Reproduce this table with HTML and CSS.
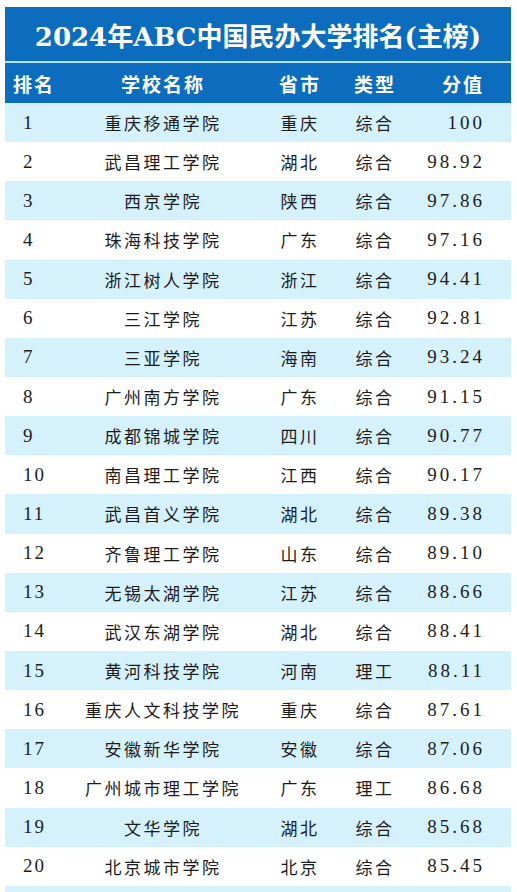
FILE: index.html
```html
<!DOCTYPE html>
<html lang="zh">
<head>
<meta charset="utf-8">
<title>2024年ABC中国民办大学排名(主榜)</title>
<link rel="stylesheet" href="styles.css">
</head>
<body>
<div class="board">
  <div class="title">2024年ABC中国民办大学排名(主榜)</div>
  <div class="row head">
    <div class="c">排名</div><div class="c">学校名称</div><div class="c">省市</div><div class="c">类型</div><div class="c">分值</div>
  </div>
  <div class="row odd"><div class="c rank">1</div><div class="c">重庆移通学院</div><div class="c">重庆</div><div class="c">综合</div><div class="c score">100</div></div>
  <div class="row"><div class="c rank">2</div><div class="c">武昌理工学院</div><div class="c">湖北</div><div class="c">综合</div><div class="c score">98.92</div></div>
  <div class="row odd"><div class="c rank">3</div><div class="c">西京学院</div><div class="c">陕西</div><div class="c">综合</div><div class="c score">97.86</div></div>
  <div class="row"><div class="c rank">4</div><div class="c">珠海科技学院</div><div class="c">广东</div><div class="c">综合</div><div class="c score">97.16</div></div>
  <div class="row odd"><div class="c rank">5</div><div class="c">浙江树人学院</div><div class="c">浙江</div><div class="c">综合</div><div class="c score">94.41</div></div>
  <div class="row"><div class="c rank">6</div><div class="c">三江学院</div><div class="c">江苏</div><div class="c">综合</div><div class="c score">92.81</div></div>
  <div class="row odd"><div class="c rank">7</div><div class="c">三亚学院</div><div class="c">海南</div><div class="c">综合</div><div class="c score">93.24</div></div>
  <div class="row"><div class="c rank">8</div><div class="c">广州南方学院</div><div class="c">广东</div><div class="c">综合</div><div class="c score">91.15</div></div>
  <div class="row odd"><div class="c rank">9</div><div class="c">成都锦城学院</div><div class="c">四川</div><div class="c">综合</div><div class="c score">90.77</div></div>
  <div class="row"><div class="c rank">10</div><div class="c">南昌理工学院</div><div class="c">江西</div><div class="c">综合</div><div class="c score">90.17</div></div>
  <div class="row odd"><div class="c rank">11</div><div class="c">武昌首义学院</div><div class="c">湖北</div><div class="c">综合</div><div class="c score">89.38</div></div>
  <div class="row"><div class="c rank">12</div><div class="c">齐鲁理工学院</div><div class="c">山东</div><div class="c">综合</div><div class="c score">89.10</div></div>
  <div class="row odd"><div class="c rank">13</div><div class="c">无锡太湖学院</div><div class="c">江苏</div><div class="c">综合</div><div class="c score">88.66</div></div>
  <div class="row"><div class="c rank">14</div><div class="c">武汉东湖学院</div><div class="c">湖北</div><div class="c">综合</div><div class="c score">88.41</div></div>
  <div class="row odd"><div class="c rank">15</div><div class="c">黄河科技学院</div><div class="c">河南</div><div class="c">理工</div><div class="c score">88.11</div></div>
  <div class="row"><div class="c rank">16</div><div class="c">重庆人文科技学院</div><div class="c">重庆</div><div class="c">综合</div><div class="c score">87.61</div></div>
  <div class="row odd"><div class="c rank">17</div><div class="c">安徽新华学院</div><div class="c">安徽</div><div class="c">综合</div><div class="c score">87.06</div></div>
  <div class="row"><div class="c rank">18</div><div class="c">广州城市理工学院</div><div class="c">广东</div><div class="c">理工</div><div class="c score">86.68</div></div>
  <div class="row odd"><div class="c rank">19</div><div class="c">文华学院</div><div class="c">湖北</div><div class="c">综合</div><div class="c score">85.68</div></div>
  <div class="row"><div class="c rank">20</div><div class="c">北京城市学院</div><div class="c">北京</div><div class="c">综合</div><div class="c score">85.45</div></div>
  <div class="row odd"><div class="c rank"></div><div class="c"></div><div class="c"></div><div class="c"></div><div class="c score"></div></div>
</div>
</body>
</html>
```
FILE: styles.css
```css
html, body {
  margin: 0;
  padding: 0;
  background: #ffffff;
}
body {
  padding: 7px 6px 0 5px;
}
.board {
  width: 506px;
}
.title {
  height: 54px;
  background: #0c6cbd;
  color: #ffffff;
  font-family: "DejaVu Serif", "Noto Sans CJK SC", serif;
  font-weight: bold;
  font-size: 26px;
  display: flex;
  align-items: center;
  justify-content: center;
  border-bottom: 2px solid #b2e2f6;
}
.row {
  display: grid;
  grid-template-columns: 56px 202px 72px 78px 98px;
  height: 39.15px;
  align-items: center;
  background: #ffffff;
  color: #1c1c1c;
  font-family: "Liberation Serif", "Noto Sans CJK SC", serif;
  font-size: 17px;
  letter-spacing: 2.5px;
}
.row.odd {
  background: #d4f1fc;
}
.row.head {
  height: 40px;
  background: #0c6cbd;
  color: #ffffff;
  font-family: "Noto Sans CJK SC", sans-serif;
  font-weight: bold;
  font-size: 19px;
  letter-spacing: 2px;
}
.c {
  text-align: center;
  padding-left: 2px;
  white-space: nowrap;
}
.rank {
  text-align: left;
  padding-left: 18px;
  font-size: 19px;
  letter-spacing: 2px;
}
.score {
  text-align: right;
  padding-right: 26px;
  font-size: 19px;
  letter-spacing: 3px;
}
```
